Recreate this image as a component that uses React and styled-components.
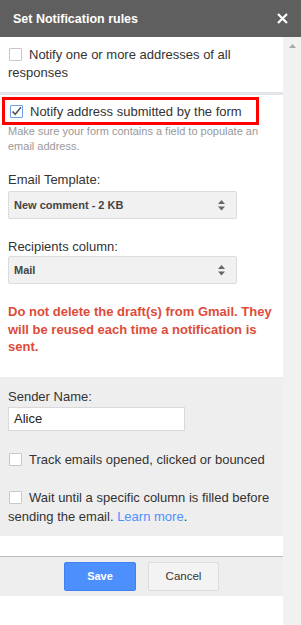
import React from "react";
import styled, { createGlobalStyle } from "styled-components";

const GlobalStyle = createGlobalStyle`
  body {
    margin: 0;
    font-family: "Liberation Sans", Arial, sans-serif;
    background: #fff;
  }
`;

const Frame = styled.div`
  width: 301px;
  height: 625px;
  display: flex;
  flex-direction: column;
  overflow: hidden;
`;

const TitleBar = styled.div`
  height: 37px;
  flex: none;
  background: #5f5f5f;
  display: flex;
  align-items: center;
  justify-content: space-between;
  padding: 0 13px 0 13px;
  color: #fff;
  font-size: 12.5px;
  font-weight: bold;
`;

const Body = styled.div`
  flex: 1;
  display: flex;
`;

const Main = styled.div`
  width: 283px;
  display: flex;
  flex-direction: column;
`;

const ScrollTrack = styled.div`
  width: 18px;
  background: #f1f1f1;
  display: flex;
  justify-content: center;
  padding-top: 7px;
  box-sizing: border-box;
`;

const Section = styled.div`
  background: ${(p) => (p.$gray ? "#eeeeee" : "#fff")};
  padding: ${(p) => p.$pad};
`;

const Divider = styled.div`
  height: 3px;
  background: #e1e4e9;
`;

const CheckRow = styled.div`
  font-size: 13px;
  line-height: ${(p) => p.$lh || 18}px;
  color: #333;
  margin-top: ${(p) => p.$top || 0}px;
`;

const Box = styled.span`
  display: inline-flex;
  align-items: center;
  justify-content: center;
  width: 13px;
  height: 13px;
  box-sizing: border-box;
  border: 1px solid ${(p) => (p.$checked ? "#6d9eeb" : "#c8c8c8")};
  background: #fff;
  border-radius: 1px;
  vertical-align: -2px;
  margin: 0 7px 0 1px;
`;

const Highlight = styled.div`
  margin: 2px 16px 0 -6px;
  border: 3px solid #ff0000;
  height: 28px;
  box-sizing: border-box;
  display: flex;
  align-items: center;
  padding-left: 4px;
  font-size: 13px;
  color: #333;
`;

const Hint = styled.div`
  margin-top: -1px;
  font-size: 11px;
  line-height: 15px;
  color: #999;
`;

const Label = styled.div`
  font-size: 13px;
  line-height: 16px;
  color: #333;
  margin-top: ${(p) => p.$top}px;
  margin-bottom: ${(p) => p.$bottom}px;
`;

const Select = styled.div`
  width: 229px;
  height: 28px;
  box-sizing: border-box;
  background: #f1f1f1;
  border: 1px solid #dcdcdc;
  border-radius: 2px;
  display: flex;
  align-items: center;
  justify-content: space-between;
  padding: 0 11px 0 5px;
  font-size: 11px;
  font-weight: bold;
  color: #444;
`;

const Warning = styled.div`
  margin-top: 19px;
  font-size: 13px;
  line-height: 17.5px;
  font-weight: bold;
  color: #dd4b39;
`;

const TextInput = styled.div`
  width: 177px;
  height: 24px;
  box-sizing: border-box;
  background: #fff;
  border: 1px solid #d9d9d9;
  display: flex;
  align-items: center;
  padding-left: 5px;
  font-size: 13px;
  color: #222;
`;

const Link = styled.a`
  color: #4d90fe;
  text-decoration: none;
`;

const Spacer = styled.div`
  height: 20px;
  background: #fff;
`;

const Footer = styled.div`
  height: 40px;
  box-sizing: border-box;
  border-top: 1px solid #bbb;
  background: #eeeeee;
  display: flex;
  justify-content: center;
  align-items: flex-start;
  padding-top: 5px;
  gap: 12px;
`;

const Button = styled.button`
  height: 29px;
  width: ${(p) => (p.$primary ? 72 : 71)}px;
  border-radius: 2px;
  font-family: "Liberation Sans", Arial, sans-serif;
  font-size: ${(p) => (p.$primary ? 11 : 11.5)}px;
  font-weight: ${(p) => (p.$primary ? "bold" : "normal")};
  color: ${(p) => (p.$primary ? "#fff" : "#333")};
  background: ${(p) => (p.$primary ? "#4d8ffd" : "#f3f3f3")};
  border: 1px solid ${(p) => (p.$primary ? "#3f83f2" : "#dcdcdc")};
  padding: 0;
`;

const Check = ({ checked }) => (
  <Box $checked={checked}>
    {checked && (
      <svg width="11" height="11" viewBox="0 0 11 11">
        <path d="M1.5 5.5 L4.2 8.3 L10 1.2" fill="none" stroke="#555" strokeWidth="1.6" />
      </svg>
    )}
  </Box>
);

const Arrows = () => (
  <svg width="7" height="11" viewBox="0 0 7 11">
    <path d="M3.5 0 L7 4 H0 Z M0 6.5 H7 L3.5 10.5 Z" fill="#666" />
  </svg>
);

export default function App() {
  return (
    <Frame>
      <GlobalStyle />
      <TitleBar>
        <span>Set Notification rules</span>
        <svg width="11" height="11" viewBox="0 0 11 11">
          <path d="M1 1 L10 10 M10 1 L1 10" stroke="#fff" strokeWidth="2.2" />
        </svg>
      </TitleBar>
      <Body>
        <Main>
          <Section $pad="9px 8px 10px">
            <CheckRow>
              <Check />Notify one or more addresses of all responses
            </CheckRow>
          </Section>
          <Divider />
          <Section $pad="0 8px 21px">
            <Highlight>
              <Check checked />Notify address submitted by the form
            </Highlight>
            <Hint>Make sure your form contains a field to populate an email address.</Hint>
            <Label $top={18} $bottom={3}>Email Template:</Label>
            <Select>
              <span>New comment - 2 KB</span>
              <Arrows />
            </Select>
            <Label $top={20} $bottom={1}>Recipients column:</Label>
            <Select>
              <span>Mail</span>
              <Arrows />
            </Select>
            <Warning>
              Do not delete the draft(s) from Gmail. They will be reused each time a notification is sent.
            </Warning>
          </Section>
          <Section $gray $pad="12px 8px 10px">
            <Label $top={0} $bottom={2}>Sender Name:</Label>
            <TextInput>Alice</TextInput>
            <CheckRow $top={20}>
              <Check />Track emails opened, clicked or bounced
            </CheckRow>
            <CheckRow $top={19} $lh={19}>
              <Check />Wait until a specific column is filled before sending the email.{" "}
              <span>
                <Link href="#">Learn more</Link>.
              </span>
            </CheckRow>
          </Section>
          <Spacer />
          <Footer>
            <Button $primary>Save</Button>
            <Button>Cancel</Button>
          </Footer>
        </Main>
        <ScrollTrack>
          <svg width="7" height="4" viewBox="0 0 7 4">
            <path d="M3.5 0 L7 4 H0 Z" fill="#a9a9a9" />
          </svg>
        </ScrollTrack>
      </Body>
    </Frame>
  );
}
